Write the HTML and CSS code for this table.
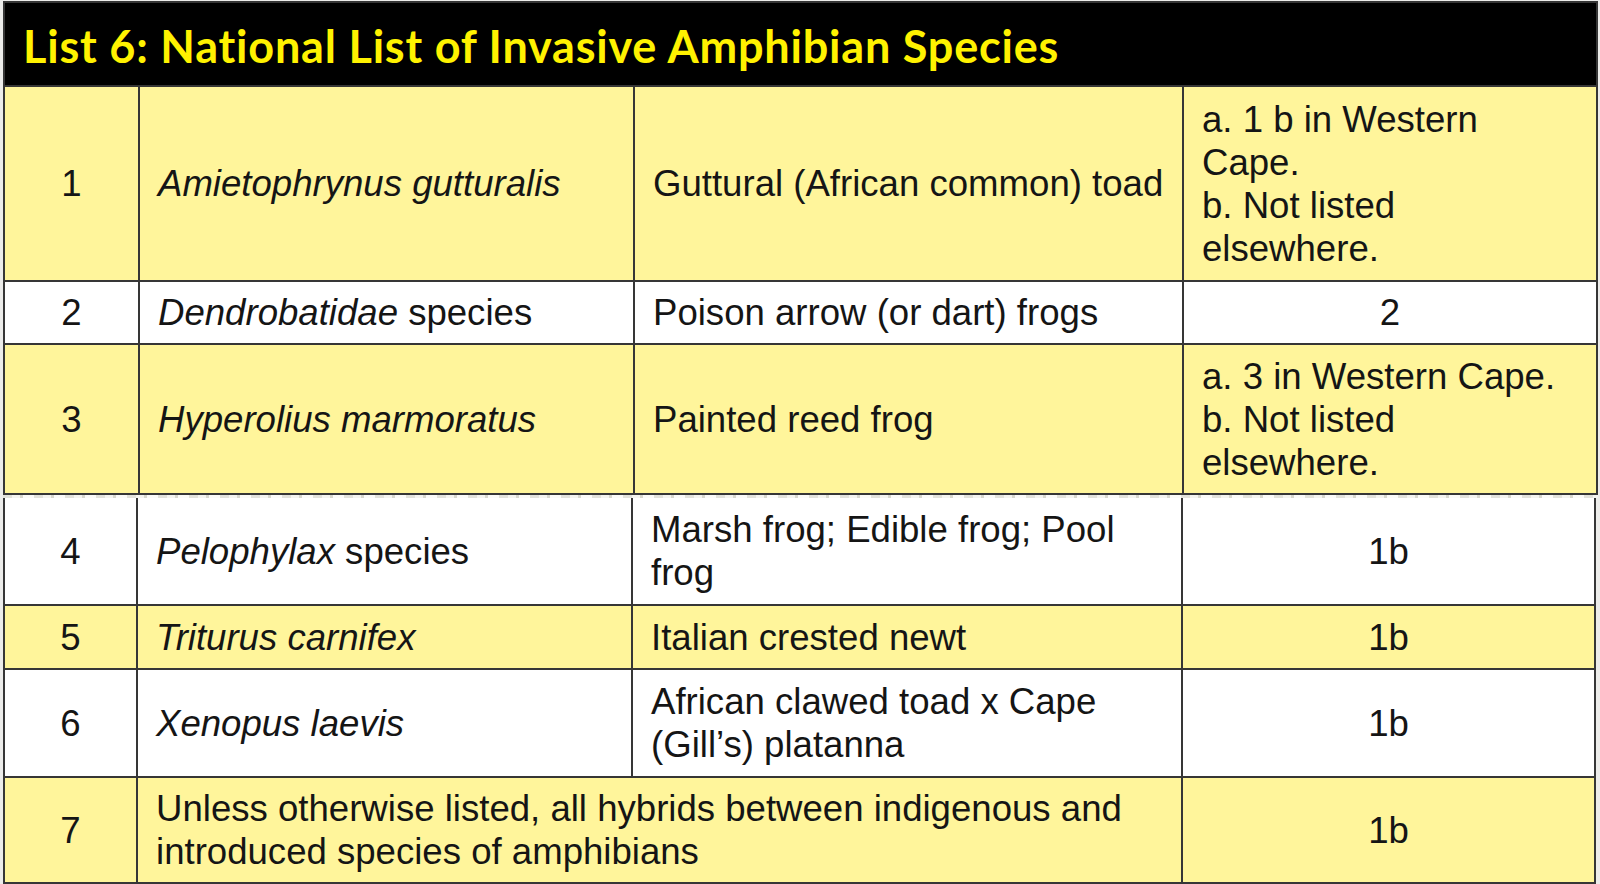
FILE: index.html
```html
<!DOCTYPE html>
<html lang="en">
<head>
<meta charset="utf-8">
<title>List 6: National List of Invasive Amphibian Species</title>
<link rel="stylesheet" href="styles.css">
</head>
<body>
<div class="sheet">
  <div class="grid upper">
    <div class="title">List 6: National List of Invasive Amphibian Species</div>

    <div class="cell num y">1</div>
    <div class="cell y"><i>Amietophrynus gutturalis</i></div>
    <div class="cell y">Guttural (African common) toad</div>
    <div class="cell y cat"><span>a. 1 b in Western Cape.</span><span>b. Not listed elsewhere.</span></div>

    <div class="cell num">2</div>
    <div class="cell"><span><i>Dendrobatidae</i> species</span></div>
    <div class="cell">Poison arrow (or dart) frogs</div>
    <div class="cell num">2</div>

    <div class="cell num y">3</div>
    <div class="cell y"><i>Hyperolius marmoratus</i></div>
    <div class="cell y">Painted reed frog</div>
    <div class="cell y cat"><span>a. 3 in Western Cape.</span><span>b. Not listed elsewhere.</span></div>
  </div>
  <div class="seam"></div>
  <div class="grid lower">
    <div class="cell num">4</div>
    <div class="cell"><span><i>Pelophylax</i> species</span></div>
    <div class="cell">Marsh frog; Edible frog; Pool frog</div>
    <div class="cell num">1b</div>

    <div class="cell num y">5</div>
    <div class="cell y"><i>Triturus carnifex</i></div>
    <div class="cell y">Italian crested newt</div>
    <div class="cell num y">1b</div>

    <div class="cell num">6</div>
    <div class="cell"><i>Xenopus laevis</i></div>
    <div class="cell">African clawed toad x Cape (Gill’s) platanna</div>
    <div class="cell num">1b</div>

    <div class="cell num y">7</div>
    <div class="cell y wide">Unless otherwise listed, all hybrids between indigenous and introduced species of amphibians</div>
    <div class="cell num y">1b</div>
  </div>
</div>
</body>
</html>
```
FILE: styles.css
```css
html, body {
  margin: 0;
  padding: 0;
  background: #ececea;
}

body {
  width: 1600px;
  height: 884px;
  overflow: hidden;
  font-family: "Liberation Sans", Arial, sans-serif;
  color: #151515;
}

.sheet {
  display: flex;
  flex-direction: column;
  margin: 1px 0 0 3px;
  width: 1595px;
}

.grid {
  display: grid;
  gap: 2px;
  background: #363636;
  padding: 2px;
}

.upper {
  grid-template-columns: 133px 493px 547px 412px;
  grid-template-rows: 82px 193px 61px 148px;
}

.lower {
  width: 1589px;
  padding-top: 0;
  grid-template-columns: 131px 493px 548px 411px;
  grid-template-rows: 106px 62px 106px 104px;
}

.seam {
  height: 3px;
  background: repeating-linear-gradient(90deg, #e2e2dc 0 9px, #f4f4f0 9px 17px, #d8d8d0 17px 20px, #fbfbf9 20px 31px);
}

.title {
  grid-column: 1 / -1;
  background: #000;
  color: #fff200;
  font-family: "Lato", "Open Sans", sans-serif;
  font-weight: 700;
  font-size: 45px;
  letter-spacing: 0.8px;
  display: flex;
  align-items: center;
  padding: 4px 0 0 18px;
}

.cell {
  background: #fff;
  font-size: 36.6px;
  line-height: 43px;
  display: flex;
  align-items: center;
  padding: 0 8px 0 18px;
}

.cell.y {
  background: #fff59b;
}

.cell.num {
  justify-content: center;
  padding: 0;
}

.cell.cat {
  flex-direction: column;
  align-items: flex-start;
  justify-content: center;
  padding-right: 30px;
}

.cell.wide {
  grid-column: 2 / 4;
}
```
